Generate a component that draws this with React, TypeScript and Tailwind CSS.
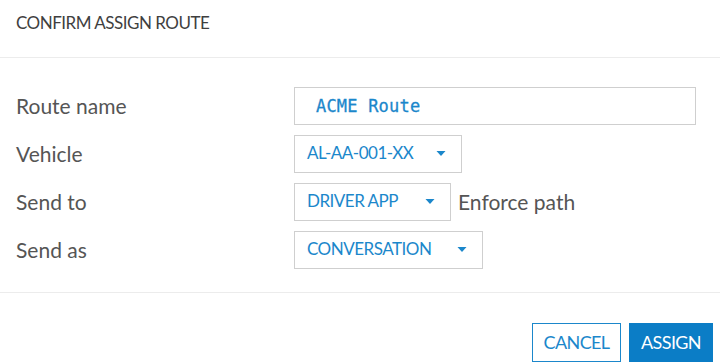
import React from "react";

const Caret = () => (
  <svg width="10" height="5" viewBox="0 0 10 5" className="shrink-0">
    <path d="M0.5 0h9L5 5z" fill="#1b87cb" />
  </svg>
);

function Select({ value, width }: { value: string; width: string }) {
  return (
    <div
      className={`flex h-[38px] items-center justify-between border border-[#cfcfcf] bg-white pb-[2px] pl-[12px] pr-[15px] text-[17px] tracking-[-0.5px] text-[#1b87cb] ${width}`}
    >
      <span>{value}</span>
      <Caret />
    </div>
  );
}

export default function App() {
  const labels = ["Route name", "Vehicle", "Send to", "Send as"];

  return (
    <div
      className="flex h-[364px] w-[720px] flex-col bg-white"
      style={{ fontFamily: "Lato, 'Open Sans', sans-serif" }}
    >
      {/* header */}
      <div className="h-[58px] border-b border-[#ececec] px-4 pt-[10px] text-[17px] tracking-[-0.5px] text-[#3f3f3f]">
        CONFIRM ASSIGN ROUTE
      </div>

      {/* form */}
      <div className="flex border-b border-[#ececec] pb-[23px] pl-4 pr-[24px] pt-[29px]">
        <div className="flex w-[278px] flex-col gap-[10px]">
          {labels.map((l) => (
            <div key={l} className="flex h-[38px] items-center text-[21px] text-[#555555]">
              {l}
            </div>
          ))}
        </div>
        <div className="flex flex-1 flex-col gap-[10px]">
          <div className="flex h-[38px] items-center border border-[#cfcfcf] pl-[21px] pt-[2px] text-[17px] tracking-[0.2px] text-[#1b87cb] [font-family:'DejaVu_Sans_Mono',monospace] [-webkit-text-stroke:0.3px_#1b87cb]">
            ACME Route
          </div>
          <Select value="AL-AA-001-XX" width="w-[168px]" />
          <div className="flex items-center gap-[7px]">
            <Select value="DRIVER APP" width="w-[157px]" />
            <span className="text-[21px] text-[#555555]">Enforce path</span>
          </div>
          <Select value="CONVERSATION" width="w-[189px]" />
        </div>
      </div>

      {/* footer */}
      <div className="flex justify-end gap-2 pr-[7px] pt-[30px]">
        <button className="h-[39px] w-[89px] border border-[#1b87cb] bg-white text-[18px] tracking-[-0.6px] text-[#1b87cb]">
          CANCEL
        </button>
        <button className="h-[39px] w-[84px] border border-[#0b7dc6] bg-[#0b7dc6] text-[18px] tracking-[-0.6px] text-white">
          ASSIGN
        </button>
      </div>
    </div>
  );
}
